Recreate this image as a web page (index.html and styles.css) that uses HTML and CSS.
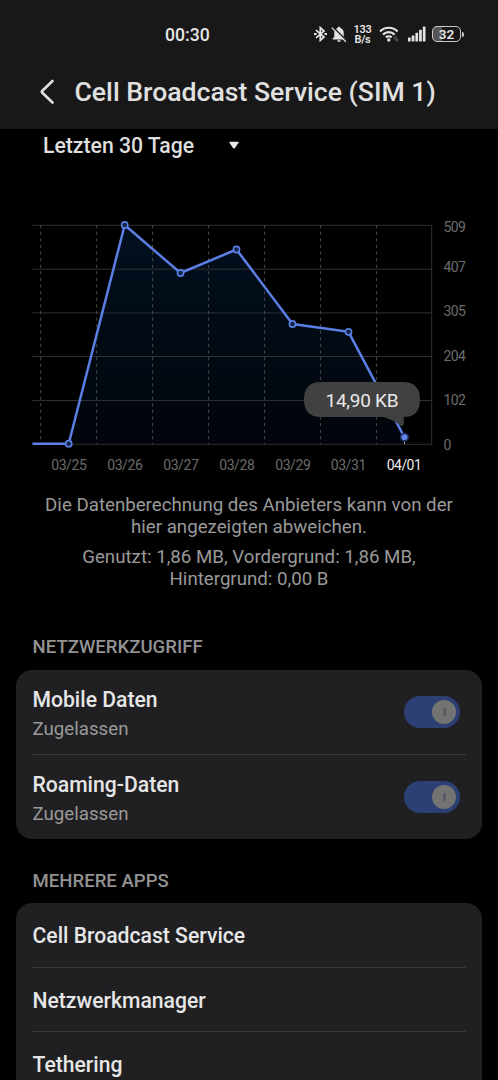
FILE: index.html
```
<!DOCTYPE html>
<html lang="de">
<head>
<meta charset="utf-8">
<title>Cell Broadcast Service (SIM 1)</title>
<link rel="stylesheet" href="styles.css">
</head>
<body>
<header class="top">
  <div class="status">
    <span class="clock">00:30</span>
    <div class="indicators">
      <svg class="ic-bt" width="13" height="16" viewBox="0 0 13 16" fill="none" stroke="#e4e4e4" stroke-width="1.7"><path d="M2 4.2 10 11 6.3 14.4V1.6L10 5 2 11.8"/><path d="M0 8h2.6M10.400 8H13" stroke-width="2.2"/></svg>
      <svg class="ic-bell" width="16" height="17" viewBox="0 0 16 17"><path fill="#e4e4e4" d="M8 .8c.8 0 1.3.5 1.3 1.2 2.200.6 3.400 2.400 3.400 4.700v4.100l1.700 1.800v.8H1.600v-.8l1.700-1.800V6.700c0-2.300 1.200-4.100 3.400-4.700C6.700 1.300 7.200.8 8 .8zM6.300 14.300h3.400c0 1-.7 1.700-1.700 1.700s-1.700-.7-1.700-1.700z"/><path d="M1.700.8 15.700 14.800" stroke="#181818" stroke-width="1.600"/><path d="M.7 1.600 14.900 15.800" stroke="#e4e4e4" stroke-width="1.300"/></svg>
      <span class="rate"><span>133</span><span>B/s</span></span>
      <svg class="ic-wifi" width="21" height="16" viewBox="0 0 21 16" fill="none" stroke="#e4e4e4" stroke-width="2.200"><path d="M1 5.400a12.400 12.400 0 0 1 17.600 0M4 8.600a8.200 8.200 0 0 1 11.600 0M6.900 11.400a4.200 4.200 0 0 1 5.800 0"/><circle cx="9.800" cy="14" r="1.700" fill="#e4e4e4" stroke="none"/><path d="M14.400 13.200 16.500 10.800 16.500 14.800M17.600 10.800V15.200L19.800 12.800" stroke="#484848" stroke-width="1.200"/></svg>
      <svg class="ic-signal" width="18" height="16" viewBox="0 0 18 16" fill="#e4e4e4"><rect x="0" y="11.500" width="2.700" height="4" rx=".6"/><rect x="3.700" y="9.500" width="2.700" height="6" rx=".6"/><rect x="7.400" y="6.800" width="2.700" height="8.700" rx=".6"/><rect x="11.100" y="3.700" width="2.700" height="11.800" rx=".6"/><rect x="14.800" y=".5" width="2.700" height="15" rx=".6"/></svg>
      <span class="battery"><span class="cell">32</span><span class="pole"></span></span>
    </div>
  </div>
  <div class="titlebar">
    <svg class="back" width="16" height="26" viewBox="0 0 16 26" fill="none" stroke="#dedede" stroke-width="2.700" stroke-linecap="round" stroke-linejoin="round"><path d="M13.500 2 3.100 12Q2.400 12.800 3.100 13.600L13.500 23.500"/></svg>
    <h1 class="title">Cell Broadcast Service (SIM 1)</h1>
  </div>
</header>
<main>
  <div class="period">
    <span class="period-text">Letzten 30 Tage</span>
    <svg width="12" height="9" viewBox="0 0 12 9"><path d="M2 1.300h8L6.500 6.600Q6 7.200 5.500 6.600z" fill="#e8e8e8" stroke="#e8e8e8" stroke-width="1.200" stroke-linejoin="round"/></svg>
  </div>
  <svg class="chart" width="498" height="290" viewBox="0 200 498 290">
    <defs><linearGradient id="area" x1="0" y1="0" x2="0" y2="1"><stop offset="0" stop-color="#02101f"/><stop offset="1" stop-color="#01050b"/></linearGradient></defs>
    <path fill="url(#area)" d="M68.700 443.700 124.700 225 180.500 273 236.500 249.500 292.500 324 348.500 331.800 404.500 437.300V444H68.700z"/>
    <path class="grid" d="M32.500 225.300H432M32.500 269.200H432M32.500 312.900H432M32.500 356.500H432M32.500 400.500H432M32.500 444.300H432M431.700 225V444.300"/>
    <path class="dashes" d="M40.700 225V444M96.700 225V444M152.600 225V444M208.600 225V444M264.600 225V444M320.600 225V444M376.600 225V444"/>
    <path stroke="#aaa" d="M404.500 438V444"/>
    <path class="line" d="M32.500 443.700H68.700L124.700 225 180.500 273 236.500 249.500 292.500 324 348.500 331.800 404.500 437.300"/>
    <g class="dots"><circle cx="68.700" cy="443.700" r="3.100"/><circle cx="124.700" cy="225" r="3.100"/><circle cx="180.500" cy="273" r="3.100"/><circle cx="236.500" cy="249.500" r="3.100"/><circle cx="292.500" cy="324" r="3.100"/><circle cx="348.500" cy="331.800" r="3.100"/></g>
    <circle cx="404.500" cy="437.300" r="4.600" fill="#1b2c55"/><circle cx="404.500" cy="437.300" r="3" fill="#5f83e8"/>
    <path fill="#414141" d="M321 382H403Q420 382 420 399.500T403.800 417V423.500Q403.500 427 400.500 425.400C395 421 389 419 383.500 417H321Q304 417 304 399.500T321 382z"/>
    <text class="tip" x="362" y="407" textLength="73">14,90 KB</text>
    <g class="days"><text x="69" y="469.700" textLength="35.500">03/25</text><text x="125" y="469.700" textLength="35.500">03/26</text><text x="181" y="469.700" textLength="35.500">03/27</text><text x="237" y="469.700" textLength="35.500">03/28</text><text x="293" y="469.700" textLength="35.500">03/29</text><text x="348.500" y="469.700" textLength="35.500">03/31</text><text class="today" x="404.300" y="469.700" textLength="35">04/01</text></g>
    <g class="values"><text x="443.500" y="231.700" textLength="22.300">509</text><text x="443.500" y="271.600" textLength="22.300">407</text><text x="443.500" y="316" textLength="22.300">305</text><text x="443.500" y="360.600" textLength="22.300">204</text><text x="443.500" y="405" textLength="22.300">102</text><text x="443.500" y="449.600">0</text></g>
  </svg>
  <p class="note">Die Datenberechnung des Anbieters kann von der<br>hier angezeigten abweichen.</p>
  <p class="note usage">Genutzt: 1,86 MB, Vordergrund: 1,86 MB,<br>Hintergrund: 0,00 B</p>
  <h2 class="section">NETZWERKZUGRIFF</h2>
  <section class="card">
    <div class="row access"><div class="labels"><div class="name">Mobile Daten</div><div class="sub">Zugelassen</div></div><span class="switch"><span class="knob"></span></span></div>
    <div class="row access"><div class="labels"><div class="name">Roaming-Daten</div><div class="sub">Zugelassen</div></div><span class="switch"><span class="knob"></span></span></div>
  </section>
  <h2 class="section apps">MEHRERE APPS</h2>
  <section class="card">
    <div class="row app name">Cell Broadcast Service</div>
    <div class="row app name">Netzwerkmanager</div>
    <div class="row app name">Tethering</div>
  </section>
</main>
</body>
</html>
```
FILE: styles.css
```
* { box-sizing: border-box; }
html { background: #000; }
body { margin: 0; width: 498px; height: 1080px; overflow: hidden; background: #000; color: #e6e6e6; font-family: Roboto, sans-serif; }
h1, h2, p { margin: 0; }
svg { display: block; flex: none; }
.top { height: 129px; background: #181818; }
.status { height: 68px; padding: 0 34px 0 165px; display: flex; align-items: center; justify-content: space-between; }
.clock { font-size: 17.600px; font-weight: 500; padding-top: 1px; }
.indicators { display: flex; align-items: center; }
.ic-bell { margin-left: 4px; }
.rate { width: 19px; margin-left: 6px; display: flex; flex-direction: column; align-items: center; font-size: 11px; line-height: 9px; font-weight: 600; letter-spacing: -.3px; padding-top: 1px; }
.ic-wifi { margin-left: 7px; }
.ic-signal { margin-left: 8px; }
.battery { display: flex; align-items: center; margin-left: 6px; }
.cell { width: 29px; height: 16px; border: 1.500px solid #c8c8c8; border-radius: 5px; background: linear-gradient(90deg, #555 32%, #181818 32%); font-size: 13.500px; line-height: 14px; text-align: center; font-weight: 600; }
.pole { width: 2px; height: 5px; margin-left: 1px; background: #ccc; border-radius: 0 2px 2px 0; }
.rate span + span { margin-top: 1px; }
.titlebar { height: 48px; padding-left: 39px; display: flex; align-items: center; }
.title { margin-left: 19.500px; font-size: 26.600px; font-weight: 500; line-height: 32px; white-space: nowrap; color: #e0e0e0; }
.period { height: 33px; padding-left: 43px; display: flex; align-items: center; gap: 33px; }
.period-text { width: 152px; font-size: 21.200px; font-weight: 500; white-space: nowrap; color: #dedede; }
.chart { margin-top: 38px; }
.grid { fill: none; stroke: #303030; stroke-width: 1; }
.dashes { fill: none; stroke: #484848; stroke-width: 1; stroke-dasharray: 3.300 3.300; }
.line { fill: none; stroke: #5b7fe5; stroke-width: 2.500; stroke-linejoin: round; }
.dots { fill: #142644; stroke: #5b7fe5; stroke-width: 1.600; }
.tip { fill: #e8e8e8; font-size: 19px; text-anchor: middle; }
.days { fill: #6b6b6b; font-size: 14px; text-anchor: middle; }
.days .today { fill: #ececec; }
.values { fill: #6b6b6b; font-size: 14px; }
.note { margin-top: 5px; text-align: center; color: #999; font-size: 18.700px; line-height: 21.500px; white-space: nowrap; }
.usage { margin-top: 9px; }
.section { margin: 46px 0 0 32.500px; height: 34px; font-size: 18.600px; line-height: 22px; font-weight: 500; color: #929292; }
.card { margin: 0 16px; padding: 0 16px; background: #202022; border-radius: 16px; }
.row { display: flex; align-items: center; justify-content: space-between; }
.row + .row { border-top: 1px solid #39393b; }
.access { height: 84px; padding-right: 6px; }
.access + .access { height: 85px; }
.labels { padding-top: 2px; }
.name { font-size: 21.150px; font-weight: 500; line-height: 27px; white-space: nowrap; padding-left: .5px; }
.sub { margin-top: 4px; padding-left: .5px; font-size: 18.700px; line-height: 24px; color: #999; }
.switch { width: 56px; height: 32px; border-radius: 16px; background: #2c4074; display: flex; align-items: center; justify-content: flex-end; padding-right: 4px; }
.knob { width: 24px; height: 24px; border-radius: 50%; background: #737373; display: flex; align-items: center; justify-content: center; }
.knob::after { content: ""; width: 3px; height: 8px; border-radius: 2px; background: #585b66; }
.apps { margin-top: 31px; height: 33px; }
.app { height: 64px; justify-content: flex-start; padding-top: 1px; }
```
